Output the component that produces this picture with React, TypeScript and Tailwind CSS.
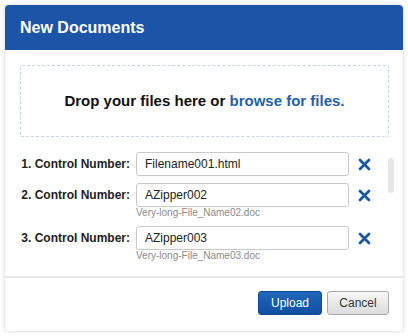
import React from "react";

const files = [
  { id: 1, value: "Filename001.html", name: "" },
  { id: 2, value: "AZipper002", name: "Very-long-File_Name02.doc" },
  { id: 3, value: "AZipper003", name: "Very-long-File_Name03.doc" },
];

function RemoveIcon() {
  return (
    <svg width="13" height="13" viewBox="0 0 13 13" className="shrink-0">
      <path d="M2 2 L11 11 M11 2 L2 11" stroke="#1f56a3" strokeWidth="2.8" strokeLinecap="round" fill="none" />
    </svg>
  );
}

export default function App() {
  return (
    <div className="w-[408px] h-[336px] p-[5px] bg-white font-['Liberation_Sans',Arial,sans-serif]">
      <div className="h-full flex flex-col rounded-[4px] overflow-hidden bg-white shadow-[0_0_4px_rgba(0,0,0,0.18)]">
        {/* Header */}
        <div className="h-[45px] shrink-0 bg-[#1c54a8] flex items-center px-[15px]">
          <h2 className="text-[16px] font-bold text-white leading-none">New Documents</h2>
        </div>

        {/* Drop zone */}
        <div className="mt-[15px] ml-[15px] mr-[14px] h-[72px] border border-dashed border-[#c3d3ea] rounded-[2px] flex items-center justify-center">
          <p className="text-[15px] font-bold text-[#111]">
            Drop your files here or <span className="text-[#2560a8]">browse for files.</span>
          </p>
        </div>

        {/* File list */}
        <div className="flex pt-[15px] pb-[14px]">
          <div className="flex-1 flex flex-col gap-[7px]">
            {files.map((f) => (
              <div key={f.id} className="flex flex-col">
                <div className="flex items-center h-[24px]">
                  <label className="w-[131px] pr-[6px] text-right text-[12px] font-bold text-[#222]">
                    {f.id}. Control Number:
                  </label>
                  <input
                    defaultValue={f.value}
                    className="w-[213px] h-[24px] px-[8px] border border-[#c9c9c9] rounded-[3px] text-[12px] text-[#222] outline-none"
                  />
                  <button className="ml-[9px] flex items-center">
                    <RemoveIcon />
                  </button>
                </div>
                {f.name && (
                  <div className="pl-[131px] text-[10px] leading-[12px] text-[#8a8a8a]">{f.name}</div>
                )}
              </div>
            ))}
          </div>
          <div className="w-[6px] mr-[9px]">
            <div className="mt-[6px] h-[35px] rounded-full bg-[#e8e8e8]" />
          </div>
        </div>

        {/* Divider */}
        <div className="h-[2px] bg-[#e8e8e8]" />

        {/* Footer */}
        <div className="flex justify-end gap-[5px] pt-[13px] pr-[14px]">
          <button className="w-[64px] h-[24px] rounded-[3px] border border-[#0e4b96] bg-gradient-to-b from-[#2067bb] to-[#0f4f9f] text-white text-[12px]">
            Upload
          </button>
          <button className="w-[62px] h-[24px] rounded-[3px] border border-[#a9a9a9] bg-gradient-to-b from-[#f7f7f7] to-[#dcdcdc] text-[#333] text-[12px]">
            Cancel
          </button>
        </div>
      </div>
    </div>
  );
}
